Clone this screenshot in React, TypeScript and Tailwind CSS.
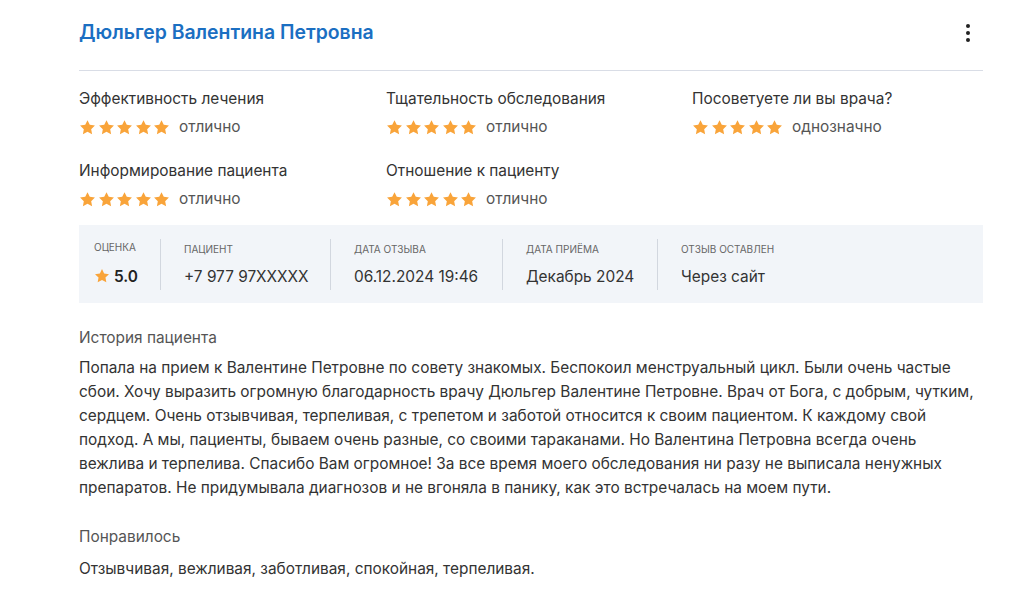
import React from 'react';

const Star: React.FC<{ size?: number }> = ({ size = 16 }) => (
  <svg width={size} height={size} viewBox="0 0 24 24" className="shrink-0">
    <path
      d="M12 1.6l3.2 6.6 7.3 1-5.3 5.1 1.3 7.2L12 18.1l-6.5 3.4 1.3-7.2-5.3-5.1 7.3-1z"
      fill="#f9a43a"
    />
  </svg>
);

const ratings = [
  { label: 'Эффективность лечения', value: 'отлично' },
  { label: 'Тщательность обследования', value: 'отлично' },
  { label: 'Посоветуете ли вы врача?', value: 'однозначно' },
  { label: 'Информирование пациента', value: 'отлично' },
  { label: 'Отношение к пациенту', value: 'отлично' },
];

const meta = [
  { label: 'Пациент', value: '+7 977 97XXXXX', width: 'w-[170px]' },
  { label: 'Дата отзыва', value: '06.12.2024 19:46', width: 'w-[172px]' },
  { label: 'Дата приёма', value: 'Декабрь 2024', width: 'w-[155px]' },
  { label: 'Отзыв оставлен', value: 'Через сайт', width: 'w-auto' },
];

export default function App() {
  return (
    <div className="min-h-screen bg-white font-['Inter',sans-serif] text-[#333]">
      <div className="w-[904px] ml-[79px] pt-[19px]">
        {/* Header */}
        <div className="flex items-center justify-between h-[28px]">
          <h1 className="text-[19.4px] font-semibold text-[#1b6fc2]">
            Дюльгер Валентина Петровна
          </h1>
          <div className="flex flex-col items-center gap-[3px] mr-[13px]">
            <span className="w-[4px] h-[4px] rounded-full bg-[#222]" />
            <span className="w-[4px] h-[4px] rounded-full bg-[#222]" />
            <span className="w-[4px] h-[4px] rounded-full bg-[#222]" />
          </div>
        </div>
        <div className="h-px bg-[#d9dde6] mt-[23px]" />

        {/* Ratings */}
        <div className="grid grid-cols-[307px_306px_291px] gap-y-[22px] mt-[17px]">
          {ratings.map((r) => (
            <div key={r.label} className="flex flex-col">
              <div className="text-[15.4px] leading-[22px] text-[#333]">{r.label}</div>
              <div className="flex items-center mt-[6px] h-[22px]">
                <div className="flex gap-[1.5px]">
                  {[0, 1, 2, 3, 4].map((i) => (
                    <Star key={i} size={17} />
                  ))}
                </div>
                <span className="ml-[9px] text-[15.4px] text-[#555]">{r.value}</span>
              </div>
            </div>
          ))}
        </div>

        {/* Meta box */}
        <div className="mt-[15px] h-[78px] bg-[#f2f5f9] flex items-center pl-[15px]">
          <div className="w-[66px]">
            <div className="text-[10px] uppercase text-[#666] leading-[14px]">Оценка</div>
            <div className="flex items-center gap-[4px] mt-[11px]">
              <Star size={16} />
              <span className="text-[15.4px] font-semibold text-[#222]">5.0</span>
            </div>
          </div>
          {meta.map((m) => (
            <div key={m.label} className={`${m.width} shrink-0 border-l border-[#d2d7df] pl-[23px] py-[2px]`}>
              <div className="text-[10px] uppercase text-[#666] leading-[14px] mt-[1px]">{m.label}</div>
              <div className="text-[15.4px] text-[#333] mt-[10px] leading-[22px] whitespace-nowrap">{m.value}</div>
            </div>
          ))}
        </div>

        {/* History */}
        <div className="mt-[24px] text-[15.4px] text-[#555] leading-[22px]">История пациента</div>
        <p className="mt-[7px] text-[15.4px] leading-[24px] text-[#333]">
          Попала на прием к Валентине Петровне по совету знакомых. Беспокоил менструальный цикл.
          Были очень частые сбои. Хочу выразить огромную благодарность врачу Дюльгер Валентине
          Петровне. Врач от Бога, с добрым, чутким, сердцем. Очень отзывчивая, терпеливая, с
          трепетом и заботой относится к своим пациентом. К каждому свой подход. А мы, пациенты,
          бываем очень разные, со своими тараканами. Но Валентина Петровна всегда очень вежлива и
          терпелива. Спасибо Вам огромное! За все время моего обследования ни разу не выписала
          ненужных препаратов. Не придумывала диагнозов и не вгоняла в панику, как это встречалась
          на моем пути.
        </p>

        <div className="mt-[26px] text-[15.4px] text-[#555] leading-[22px]">Понравилось</div>
        <p className="mt-[9px] text-[15.4px] leading-[24px] text-[#333]">
          Отзывчивая, вежливая, заботливая, спокойная, терпеливая.
        </p>
      </div>
    </div>
  );
}
